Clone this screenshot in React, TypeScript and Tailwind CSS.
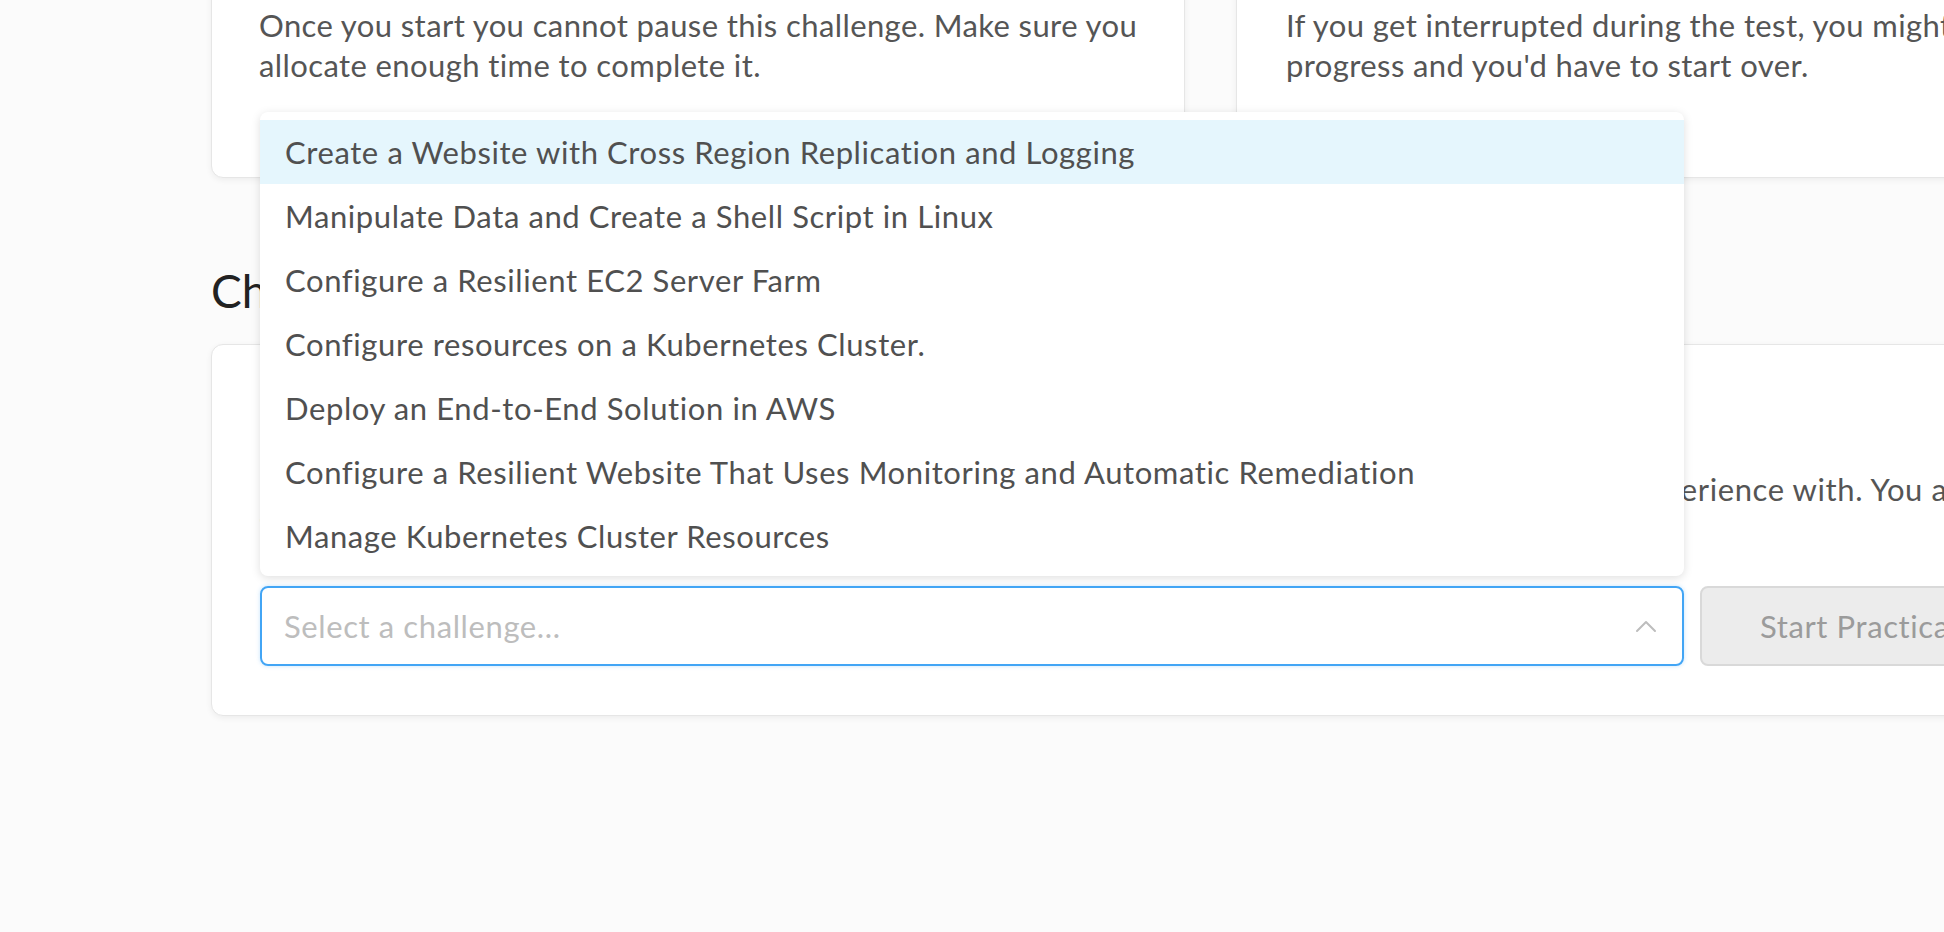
import React from "react";

const challenges = [
  "Create a Website with Cross Region Replication and Logging",
  "Manipulate Data and Create a Shell Script in Linux",
  "Configure a Resilient EC2 Server Farm",
  "Configure resources on a Kubernetes Cluster.",
  "Deploy an End-to-End Solution in AWS",
  "Configure a Resilient Website That Uses Monitoring and Automatic Remediation",
  "Manage Kubernetes Cluster Resources",
];

const ChevronUp = () => (
  <svg width="22" height="14" viewBox="0 0 22 14" fill="none" className="shrink-0">
    <path d="M2 12 L11 3 L20 12" stroke="#bdbdbd" strokeWidth="2" strokeLinecap="round" strokeLinejoin="round" />
  </svg>
);

const App = () => {
  return (
    <div
      className="w-[1944px] h-[932px] overflow-hidden bg-[#fbfbfb] text-[#555555] tracking-[0.6px]"
      style={{ fontFamily: "Lato, 'Open Sans', sans-serif" }}
    >
      <div className="w-[2000px] ml-[211px] -mt-[60px]">
        {/* top info cards */}
        <div className="flex gap-[51px]">
          <div className="w-[974px] shrink-0 bg-white border border-[#e6e6e6] rounded-xl shadow-[0_2px_6px_rgba(0,0,0,0.06)] pl-[47px] pr-[20px] pt-[64px] pb-[92px]">
            <p className="text-[31px] leading-[40px] tracking-[0.4px] whitespace-nowrap">
              Once you start you cannot pause this challenge. Make sure you
              <br />
              allocate enough time to complete it.
            </p>
          </div>
          <div className="w-[974px] shrink-0 bg-white border border-[#e6e6e6] rounded-xl shadow-[0_2px_6px_rgba(0,0,0,0.06)] pl-[49px] pr-[20px] pt-[64px] pb-[92px]">
            <p className="text-[31px] leading-[40px] tracking-[0.4px] whitespace-nowrap">
              If you get interrupted during the test, you might lose your
              <br />
              progress and you'd have to start over.
            </p>
          </div>
        </div>

        {/* section heading */}
        <h2 className="text-[46px] leading-[56px] text-[#222222] tracking-normal mt-[85px] mb-[25px]">
          Choose a Challenge
        </h2>

        {/* challenge card */}
        <div className="w-[1999px] bg-white border border-[#e6e6e6] rounded-xl shadow-[0_2px_6px_rgba(0,0,0,0.06)] pl-[48px] pr-[48px] pt-[46px] pb-[49px]">
          <h3 className="text-[30px] leading-[56px] font-bold text-[#333333]">Practical Exam</h3>
          <p className="text-[31px] leading-[40px] mt-[22px] whitespace-nowrap">
            Select one of the practical challenges below, ideally one for a technology you have had hands-on experience with. You are
            <br />
            Take your time to read the instructions carefully before you begin.
          </p>

          <div className="flex gap-[16px] mt-[37px]">
            <div className="relative w-[1424px] shrink-0">
              {/* open menu */}
              <ul className="absolute left-0 right-0 bottom-full mb-[10px] bg-white rounded-lg shadow-[0_2px_10px_rgba(0,0,0,0.13)] py-[8px] z-10">
                {challenges.map((c, i) => (
                  <li
                    key={c}
                    className={
                      "h-[64px] flex items-center pl-[25px] text-[31px] text-[#505050] " +
                      (i === 0 ? "bg-[#e5f6fd]" : "")
                    }
                  >
                    {c}
                  </li>
                ))}
              </ul>

              <div className="h-[80px] flex items-center justify-between border-2 border-[#42a5f5] rounded-lg pl-[22px] pr-[25px] shadow-[0_0_4px_rgba(66,165,245,0.3)]">
                <span className="text-[31px] text-[#bdbdbd]">Select a challenge...</span>
                <ChevronUp />
              </div>
            </div>

            <button className="h-[80px] w-[400px] shrink-0 flex items-center whitespace-nowrap bg-[#ececec] border-2 border-[#d9d9d9] rounded-lg pl-[58px] text-[31px] text-[#9b9b9b]">
              Start Practical Exam
            </button>
          </div>
        </div>
      </div>
    </div>
  );
};

export default App;
